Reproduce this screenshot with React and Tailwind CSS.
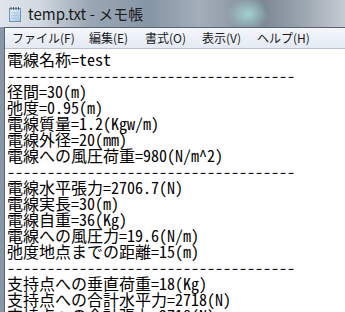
import React from "react";

const lines = [
  "電線名称=test",
  "------------------------------------",
  "径間=30(m)",
  "弛度=0.95(m)",
  "電線質量=1.2(Kgw/m)",
  "電線外径=20(mm)",
  "電線への風圧荷重=980(N/m^2)",
  "------------------------------------",
  "電線水平張力=2706.7(N)",
  "電線実長=30(m)",
  "電線自重=36(Kg)",
  "電線への風圧力=19.6(N/m)",
  "弛度地点までの距離=15(m)",
  "------------------------------------",
  "支持点への垂直荷重=18(Kg)",
  "支持点への合計水平力=2718(N)",
  "支持点への合計張力=2718(N)",
];

function NoteIcon() {
  return (
    <svg width="14" height="16" viewBox="0 0 14 16">
      <defs>
        <linearGradient id="ng" x1="0" y1="0" x2="1" y2="1">
          <stop offset="0" stopColor="#e8f4fc" />
          <stop offset="1" stopColor="#9cc8e8" />
        </linearGradient>
      </defs>
      <rect x="1.5" y="2.5" width="11" height="13" fill="url(#ng)" stroke="#6f94b4" />
      <line x1="3" y1="1" x2="3" y2="4" stroke="#555" />
      <line x1="5.5" y1="1" x2="5.5" y2="4" stroke="#555" />
      <line x1="8" y1="1" x2="8" y2="4" stroke="#555" />
      <line x1="10.5" y1="1" x2="10.5" y2="4" stroke="#555" />
      <line x1="3.5" y1="7" x2="10.5" y2="7" stroke="#a9c6de" />
      <line x1="3.5" y1="9.5" x2="10.5" y2="9.5" stroke="#a9c6de" />
      <line x1="3.5" y1="12" x2="10.5" y2="12" stroke="#a9c6de" />
    </svg>
  );
}

export default function App() {
  return (
    <div className="w-[345px] h-[312px] overflow-hidden flex flex-col bg-[#b9c6d3]">
      <div
        className="h-[27px] shrink-0 flex items-center pl-[8px] gap-[4px]"
        style={{
          background:
            "radial-gradient(ellipse 20px 16px at 248px 14px, #9fd2d0 0%, rgba(159,210,208,0) 100%), linear-gradient(90deg, #dfe5eb 0px, #d0d8e0 40px, #9aa6b3 90px, #8796a6 150px, #a3aeba 200px, #7d8995 265px, #99a3ad 300px, #c4ccd4 345px)",
        }}
      >
        <NoteIcon />
        <span
          className="text-[15px] text-[#1a1a1a] leading-none pl-[2px]"
          style={{ fontFamily: "'Noto Sans CJK JP', sans-serif" }}
        >
          temp.txt - メモ帳
        </span>
      </div>
      <div className="flex-1 flex pl-[4px] bg-[linear-gradient(90deg,#8897a8,#a9b7c6)]">
        <div className="flex-1 flex flex-col border-l border-t border-[#5b6470] bg-white">
          <div
            className="h-[21px] shrink-0 flex items-center text-[12px] text-[#1a1a1a] border-b border-[#b8c0cb] bg-[linear-gradient(180deg,#f4f7fb,#e3eaf3)] whitespace-nowrap"
            style={{ fontFamily: "'Noto Sans CJK JP', sans-serif" }}
          >
            <span className="w-[84px] shrink-0 pl-[7px]">ファイル(F)</span>
            <span className="w-[56px] shrink-0">編集(E)</span>
            <span className="w-[57px] shrink-0">書式(O)</span>
            <span className="w-[55px] shrink-0">表示(V)</span>
            <span className="shrink-0">ヘルプ(H)</span>
          </div>
          <div
            className="pt-[2px] pl-[2px] text-[16px] leading-[16px] text-black whitespace-pre"
            style={{ fontFamily: "'Noto Sans Mono CJK JP', 'Noto Sans CJK JP', monospace" }}
          >
            {lines.map((l, i) => (
              <div key={i} className="h-[16px]">{l}</div>
            ))}
          </div>
        </div>
      </div>
    </div>
  );
}
